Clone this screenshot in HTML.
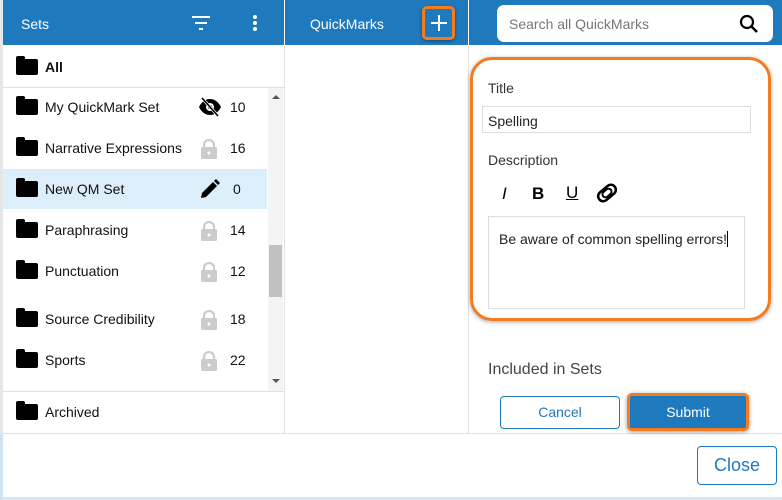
<!DOCTYPE html>
<html><head><style>
*{box-sizing:border-box;margin:0;padding:0}
body{width:782px;height:500px;background:#fff;font-family:"Liberation Sans",sans-serif;position:relative;overflow:hidden}
.abs{position:absolute}
.hdr{top:0;height:45px;background:#1e79bd;color:#fff;font-size:14px}
.row{position:absolute;left:3px;width:264px;height:41px;font-size:14px;color:#111}
.row .f{position:absolute;left:13px;top:13px;width:22px;height:16px;background:#000;border-radius:2px}
.row .f:before{content:"";position:absolute;left:0;top:-3px;width:9px;height:5px;background:#000;border-radius:2px 2px 0 0}
.row .t{position:absolute;left:42px;top:13px}
.row .n{position:absolute;left:227px;top:13px}
.lock{position:absolute;left:198px;top:12px;width:16px;height:20px}
</style></head><body>
<div class="abs hdr" style="left:3px;width:281px"><span class="abs" style="left:18px;top:16px">Sets</span>
<svg class="abs" style="left:188px;top:15px" width="20" height="16"><rect x="1" y="1" width="18" height="2" fill="#fff"/><rect x="4" y="7" width="12" height="2" fill="#fff"/><rect x="8" y="13" width="4" height="2" fill="#fff"/></svg>
<svg class="abs" style="left:249px;top:14px" width="6" height="18"><circle cx="3" cy="3" r="2" fill="#fff"/><circle cx="3" cy="9" r="2" fill="#fff"/><circle cx="3" cy="15" r="2" fill="#fff"/></svg></div>
<div class="abs hdr" style="left:285px;width:183px"><span class="abs" style="left:25px;top:16px">QuickMarks</span>
<div class="abs" style="left:137px;top:6px;width:33px;height:34px;border:3px solid #f47b20;border-radius:5px;box-shadow:0 1px 3px rgba(0,0,0,.4)"></div>
<svg class="abs" style="left:146px;top:15px" width="16" height="16"><rect x="7" y="0" width="2" height="16" fill="#fff"/><rect x="0" y="7" width="16" height="2" fill="#fff"/></svg></div>
<div class="abs hdr" style="left:469px;width:313px">
<div class="abs" style="left:28px;top:5px;width:276px;height:37px;background:#fff;border-radius:7px"><span class="abs" style="left:12px;top:11px;color:#777;font-size:14px">Search all QuickMarks</span>
<svg class="abs" style="left:242px;top:9px" width="20" height="20"><circle cx="8" cy="8" r="6" fill="none" stroke="#000" stroke-width="2.2"/><line x1="12.5" y1="12.5" x2="18" y2="18" stroke="#000" stroke-width="2.5"/></svg></div></div>
<div class="abs" style="left:0;top:0;width:3px;height:500px;background:#e6e6e6"></div>
<div class="abs" style="left:284px;top:45px;width:1px;height:388px;background:#e2e2e2"></div>
<div class="abs" style="left:468px;top:45px;width:1px;height:388px;background:#e2e2e2"></div>
<div class="abs" style="left:3px;top:87px;width:281px;height:1px;background:#e0e0e0"></div>
<div class="abs" style="left:3px;top:391px;width:281px;height:1px;background:#e0e0e0"></div>
<div class="abs" style="left:3px;top:433px;width:779px;height:1px;background:#e0e0e0"></div>
<div class="abs" style="left:3px;top:497px;width:779px;height:3px;background:#d7e7f4"></div>
<div class="abs" style="left:0;top:434px;width:3px;height:66px;background:#cfe3f3"></div>
<div class="row" style="top:46px;width:281px"><div class="f"></div><b class="t">All</b></div>
<div class="abs" style="left:3px;top:169px;width:264px;height:40px;background:#ddeefb"></div>
<div class="row" style="top:86px"><div class="f"></div><span class="t">My QuickMark Set</span>
<svg class="abs" style="left:195px;top:11px" width="24" height="20" viewBox="0 0 24 20"><path d="M1 10C4 4 8 2 12 2s8 2 11 8c-3 6-7 8-11 8S4 16 1 10z" fill="#000"/><circle cx="12" cy="10" r="4" fill="#fff"/><circle cx="12" cy="10" r="2" fill="#000"/><line x1="4" y1="1" x2="20" y2="19" stroke="#fff" stroke-width="3"/><line x1="4" y1="1" x2="20" y2="19" stroke="#000" stroke-width="1.6"/></svg><span class="n">10</span></div>
<div class="row" style="top:127px"><div class="f"></div><span class="t">Narrative Expressions</span><svg class="lock" viewBox="0 0 16 20"><path d="M3 9V6a5 5 0 0 1 10 0v3" fill="none" stroke="#ccc" stroke-width="2.2"/><rect x="0" y="8" width="16" height="12" rx="1.5" fill="#ccc"/><circle cx="8" cy="14" r="1.5" fill="#fff"/></svg><span class="n">16</span></div>
<div class="row" style="top:168px"><div class="f"></div><span class="t">New QM Set</span>
<svg class="abs" style="left:197px;top:11px" width="20" height="20" viewBox="0 0 20 20"><path d="M1 19l1-5L13 3l4 4L6 18z" fill="#000"/><path d="M14 2l2-2 4 4-2 2z" fill="#000"/></svg><span class="n" style="left:230px">0</span></div>
<div class="row" style="top:209px"><div class="f"></div><span class="t">Paraphrasing</span><svg class="lock" viewBox="0 0 16 20"><path d="M3 9V6a5 5 0 0 1 10 0v3" fill="none" stroke="#ccc" stroke-width="2.2"/><rect x="0" y="8" width="16" height="12" rx="1.5" fill="#ccc"/><circle cx="8" cy="14" r="1.5" fill="#fff"/></svg><span class="n">14</span></div>
<div class="row" style="top:250px"><div class="f"></div><span class="t">Punctuation</span><svg class="lock" viewBox="0 0 16 20"><path d="M3 9V6a5 5 0 0 1 10 0v3" fill="none" stroke="#ccc" stroke-width="2.2"/><rect x="0" y="8" width="16" height="12" rx="1.5" fill="#ccc"/><circle cx="8" cy="14" r="1.5" fill="#fff"/></svg><span class="n">12</span></div>
<div class="row" style="top:298px"><div class="f"></div><span class="t">Source Credibility</span><svg class="lock" viewBox="0 0 16 20"><path d="M3 9V6a5 5 0 0 1 10 0v3" fill="none" stroke="#ccc" stroke-width="2.2"/><rect x="0" y="8" width="16" height="12" rx="1.5" fill="#ccc"/><circle cx="8" cy="14" r="1.5" fill="#fff"/></svg><span class="n">18</span></div>
<div class="row" style="top:339px"><div class="f"></div><span class="t">Sports</span><svg class="lock" viewBox="0 0 16 20"><path d="M3 9V6a5 5 0 0 1 10 0v3" fill="none" stroke="#ccc" stroke-width="2.2"/><rect x="0" y="8" width="16" height="12" rx="1.5" fill="#ccc"/><circle cx="8" cy="14" r="1.5" fill="#fff"/></svg><span class="n">22</span></div>
<div class="row" style="top:391px"><div class="f"></div><span class="t">Archived</span></div>
<div class="abs" style="left:268px;top:88px;width:15px;height:303px;background:#f4f4f4"></div>
<div class="abs" style="left:269px;top:245px;width:13px;height:52px;background:#c1c1c1"></div>
<div class="abs" style="left:272px;top:95px;width:0;height:0;border:4px solid transparent;border-bottom:4px solid #555;border-top:0"></div>
<div class="abs" style="left:272px;top:379px;width:0;height:0;border:4px solid transparent;border-top:4px solid #555;border-bottom:0"></div>
<div class="abs" style="left:470px;top:57px;width:301px;height:264px;border:3px solid #f47b20;border-radius:22px;box-shadow:0 1px 4px rgba(0,0,0,.35)"></div>
<span class="abs" style="left:488px;top:80px;font-size:14px;color:#333">Title</span>
<div class="abs" style="left:482px;top:106px;width:269px;height:27px;border:1px solid #ddd"><span class="abs" style="left:5px;top:6px;font-size:14px;color:#222">Spelling</span></div>
<span class="abs" style="left:488px;top:152px;font-size:14px;color:#333">Description</span>
<span class="abs" style="left:502px;top:184px;font-size:17px;font-style:italic;color:#000">I</span>
<b class="abs" style="left:532px;top:184px;font-size:17px">B</b>
<span class="abs" style="left:566px;top:183px;font-size:17px;text-decoration:underline">U</span>
<svg class="abs" style="left:596px;top:183px" width="22" height="20" viewBox="0 0 22 20"><g transform="rotate(-40 11 10)"><rect x="1" y="5" width="20" height="10" rx="5" fill="none" stroke="#000" stroke-width="2.5"/><rect x="6" y="7" width="10" height="6" rx="3" fill="none" stroke="#000" stroke-width="2"/></g></svg>
<div class="abs" style="left:488px;top:216px;width:257px;height:93px;border:1px solid #ddd"><span class="abs" style="left:10px;top:14px;font-size:14px;color:#222">Be aware of common spelling errors! <span style="border-left:1px solid #000"> </span></span></div>
<span class="abs" style="left:488px;top:361px;font-size:16px;color:#444">Included in Sets</span>
<div class="abs" style="left:500px;top:396px;width:120px;height:33px;border:1px solid #1e79bd;border-radius:4px;color:#1e79bd;font-size:14px;text-align:center;line-height:31px">Cancel</div>
<div class="abs" style="left:627px;top:393px;width:122px;height:38px;border:3px solid #f47b20;border-radius:5px;background:#1e79bd;color:#fff;font-size:14px;text-align:center;line-height:32px;box-shadow:0 1px 4px rgba(0,0,0,.4)">Submit</div>
<div class="abs" style="left:697px;top:446px;width:80px;height:39px;border:1px solid #1e79bd;border-radius:4px;color:#1e79bd;font-size:18px;text-align:center;line-height:37px">Close</div>
</body></html>
